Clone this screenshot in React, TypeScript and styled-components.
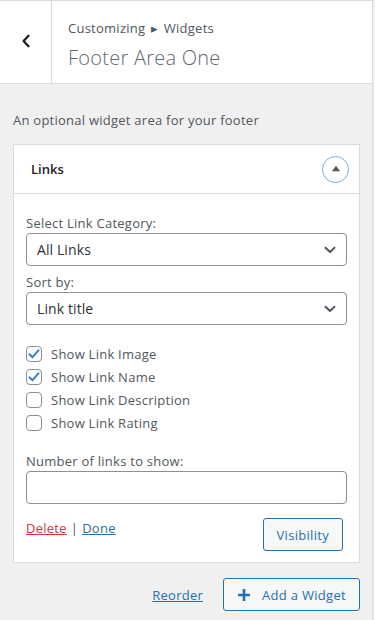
import * as React from 'react';
import styled, { createGlobalStyle } from 'styled-components';

const GlobalStyle = createGlobalStyle`
  html, body {
    margin: 0;
    padding: 0;
    background: #f0f0f1;
  }
  body {
    font-family: "Open Sans", "Noto Sans", "Liberation Sans", sans-serif;
    font-size: 13px;
    letter-spacing: 0.25px;
    color: #3c434a;
  }
  * {
    box-sizing: border-box;
  }
`;

const Panel = styled.div`
  width: 373px;
  min-height: 620px;
  background: #f0f0f1;
  border-right: 1px solid #dcdcde;
`;

const Header = styled.div`
  display: flex;
  height: 84px;
  background: #fff;
  border-top: 1px solid #dcdcde;
  border-bottom: 1px solid #dcdcde;
`;

const BackButton = styled.button`
  width: 52px;
  flex: none;
  display: flex;
  align-items: center;
  justify-content: center;
  background: transparent;
  border: 0;
  border-right: 1px solid #dcdcde;
  padding: 0 0 2px;
  color: #1d2327;
`;

const Titles = styled.div`
  display: flex;
  flex-direction: column;
  justify-content: center;
  padding: 6px 0 0 16px;
`;

const Crumbs = styled.div`
  font-size: 13px;
  line-height: 20px;
  color: #50575e;
  word-spacing: 2px;
`;

const Title = styled.div`
  font-size: 20px;
  line-height: 30px;
  font-weight: 300;
  color: #646970;
  margin-top: 5px;
`;

const Description = styled.p`
  margin: 27px 13px 15px;
  font-size: 13px;
  line-height: 18px;
  color: #50575e;
`;

const Card = styled.div`
  margin: 0 12px 0 13px;
  background: #fff;
  border: 1px solid #dcdcde;
`;

const CardHeader = styled.div`
  display: flex;
  align-items: center;
  justify-content: space-between;
  height: 49px;
  padding: 0 10px 0 17px;
  border-bottom: 1px solid #dcdcde;
`;

const CardTitle = styled.h3`
  margin: 0;
  font-size: 13px;
  font-weight: 600;
  letter-spacing: 0;
  color: #1d2327;
`;

const Toggle = styled.button`
  width: 27px;
  height: 27px;
  border-radius: 50%;
  border: 1.5px solid #72aee6;
  background: #fff;
  display: flex;
  align-items: center;
  justify-content: center;
  padding: 0 0 2px;
`;

const CardBody = styled.div`
  padding: 20px 12px 11px;
`;

const Label = styled.label`
  display: block;
  font-size: 13px;
  line-height: 18px;
  color: #50575e;
  margin-bottom: 1px;
`;

const SelectBox = styled.div<{ $gap: number }>`
  display: flex;
  align-items: center;
  justify-content: space-between;
  height: 33px;
  padding: 0 10px 0 10px;
  margin-bottom: ${(p) => p.$gap}px;
  border: 1px solid #8c8f94;
  border-radius: 4px;
  font-size: 14px;
  letter-spacing: 0.1px;
  color: #2c3338;
`;

const CheckList = styled.div`
  display: flex;
  flex-direction: column;
  margin-bottom: 18px;
`;

const CheckRow = styled.div`
  display: flex;
  align-items: center;
  gap: 9px;
  height: 23px;
  font-size: 13px;
  color: #50575e;
`;

const Box = styled.span`
  width: 16px;
  height: 16px;
  border: 1px solid #8c8f94;
  border-radius: 4px;
  display: flex;
  align-items: center;
  justify-content: center;
  background: #fff;
`;

const TextInput = styled.input`
  display: block;
  width: 100%;
  height: 33px;
  margin: 1px 0 0;
  border: 1px solid #8c8f94;
  border-radius: 4px;
  background: #fff;
`;

const Actions = styled.div`
  display: flex;
  justify-content: space-between;
  align-items: flex-start;
  margin-top: 14px;
  padding-right: 4px;
`;

const LinkRow = styled.div`
  margin-top: 1px;
  font-size: 13px;
  line-height: 18px;
  color: #50575e;
`;

const TextLink = styled.a<{ $danger?: boolean }>`
  color: ${(p) => (p.$danger ? '#d63638' : '#2271b1')};
  text-decoration: underline;
  cursor: pointer;
`;

const Sep = styled.span`
  margin: 0 4px;
  color: #50575e;
`;

const OutlineButton = styled.button`
  display: inline-flex;
  align-items: center;
  justify-content: center;
  gap: 11px;
  height: 33px;
  padding: 0 13px;
  border: 1px solid #2271b1;
  border-radius: 3px;
  background: #f6f7f7;
  color: #2271b1;
  font-family: inherit;
  font-size: 13px;
  letter-spacing: 0.3px;
`;

const Footer = styled.div`
  display: flex;
  justify-content: flex-end;
  align-items: center;
  gap: 20px;
  margin: 15px 12px 0;
`;

const Checkmark = () => (
  <svg width="14" height="14" viewBox="0 0 14 14">
    <path d="M2.5 7.2 L5.6 10.2 L11.6 3.2" fill="none" stroke="#3582c4" strokeWidth="2" strokeLinecap="round" strokeLinejoin="round" />
  </svg>
);

const Chevron = () => (
  <svg width="12" height="8" viewBox="0 0 12 8">
    <path d="M1.5 1.8 L6 6 L10.5 1.8" fill="none" stroke="#50575e" strokeWidth="2" strokeLinecap="round" strokeLinejoin="round" />
  </svg>
);

const options = [
  { label: 'Show Link Image', checked: true },
  { label: 'Show Link Name', checked: true },
  { label: 'Show Link Description', checked: false },
  { label: 'Show Link Rating', checked: false },
];

export default function App() {
  return (
    <Panel>
      <GlobalStyle />
      <Header>
        <BackButton aria-label="Back">
          <svg width="10" height="14" viewBox="0 0 10 14">
            <path d="M7.5 1.8 L2.6 7 L7.5 12.2" fill="none" stroke="#1d2327" strokeWidth="2.4" strokeLinecap="round" strokeLinejoin="round" />
          </svg>
        </BackButton>
        <Titles>
          <Crumbs>Customizing ▸ Widgets</Crumbs>
          <Title>Footer Area One</Title>
        </Titles>
      </Header>

      <Description>An optional widget area for your footer</Description>

      <Card>
        <CardHeader>
          <CardTitle>Links</CardTitle>
          <Toggle aria-label="Collapse">
            <svg width="10" height="7" viewBox="0 0 10 7">
              <path d="M5 0.8 L9 6.2 L1 6.2 Z" fill="#50575e" />
            </svg>
          </Toggle>
        </CardHeader>
        <CardBody>
          <Label>Select Link Category:</Label>
          <SelectBox $gap={7}>
            All Links
            <Chevron />
          </SelectBox>
          <Label>Sort by:</Label>
          <SelectBox $gap={17}>
            Link title
            <Chevron />
          </SelectBox>
          <CheckList>
            {options.map((o) => (
              <CheckRow key={o.label}>
                <Box>{o.checked && <Checkmark />}</Box>
                {o.label}
              </CheckRow>
            ))}
          </CheckList>
          <Label>Number of links to show:</Label>
          <TextInput type="text" />
          <Actions>
            <LinkRow>
              <TextLink $danger>Delete</TextLink>
              <Sep>|</Sep>
              <TextLink>Done</TextLink>
            </LinkRow>
            <OutlineButton>Visibility</OutlineButton>
          </Actions>
        </CardBody>
      </Card>

      <Footer>
        <TextLink>Reorder</TextLink>
        <OutlineButton>
          <svg width="14" height="14" viewBox="0 0 14 14">
            <path d="M7 1 V13 M1 7 H13" stroke="#2271b1" strokeWidth="2.6" />
          </svg>
          Add a Widget
        </OutlineButton>
      </Footer>
    </Panel>
  );
}
